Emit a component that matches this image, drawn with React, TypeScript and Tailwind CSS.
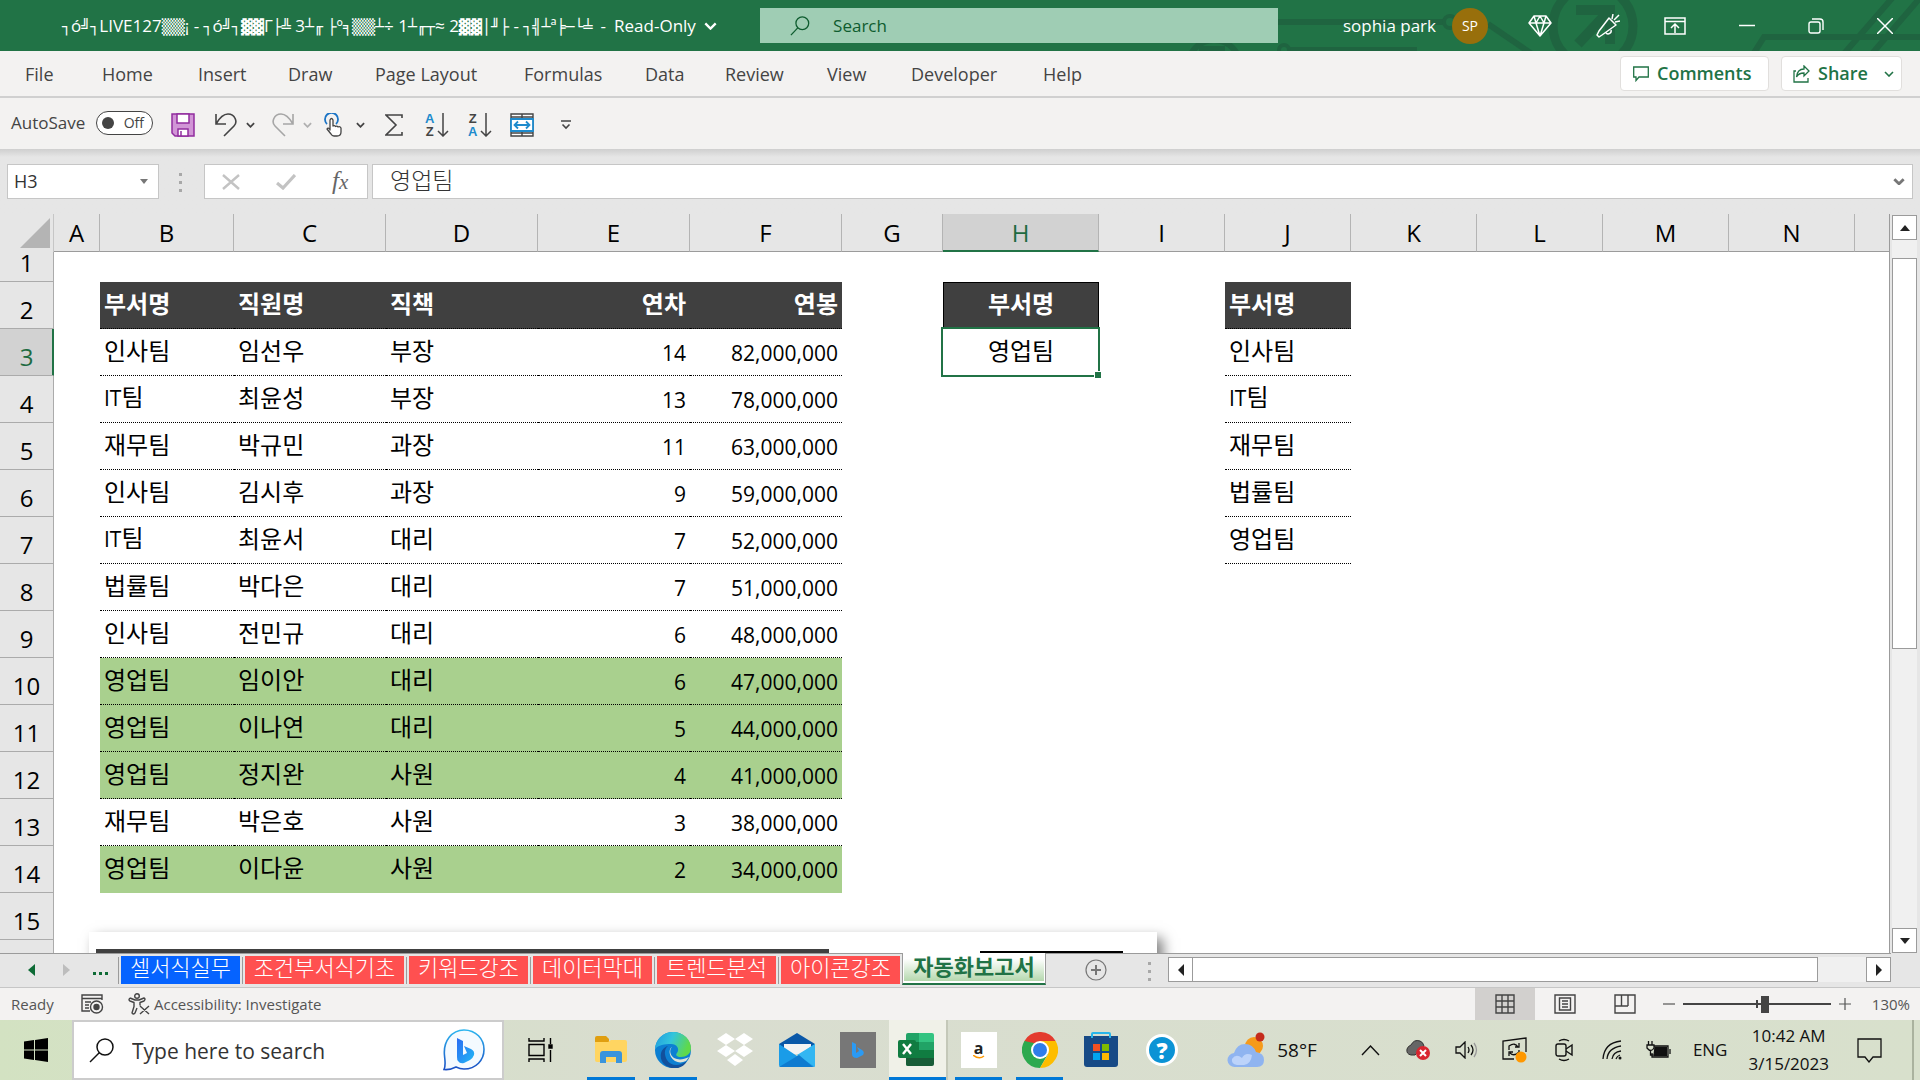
import type { ReactNode } from "react";

interface Employee {
  team: string;
  name: string;
  title: string;
  years: number;
  salary: string;
}

const EMPLOYEES: Employee[] = [
  { team: "인사팀", name: "임선우", title: "부장", years: 14, salary: "82,000,000" },
  { team: "IT팀", name: "최윤성", title: "부장", years: 13, salary: "78,000,000" },
  { team: "재무팀", name: "박규민", title: "과장", years: 11, salary: "63,000,000" },
  { team: "인사팀", name: "김시후", title: "과장", years: 9, salary: "59,000,000" },
  { team: "IT팀", name: "최윤서", title: "대리", years: 7, salary: "52,000,000" },
  { team: "법률팀", name: "박다은", title: "대리", years: 7, salary: "51,000,000" },
  { team: "인사팀", name: "전민규", title: "대리", years: 6, salary: "48,000,000" },
  { team: "영업팀", name: "임이안", title: "대리", years: 6, salary: "47,000,000" },
  { team: "영업팀", name: "이나연", title: "대리", years: 5, salary: "44,000,000" },
  { team: "영업팀", name: "정지완", title: "사원", years: 4, salary: "41,000,000" },
  { team: "재무팀", name: "박은호", title: "사원", years: 3, salary: "38,000,000" },
  { team: "영업팀", name: "이다윤", title: "사원", years: 2, salary: "34,000,000" },
];

const TEAMS = ["인사팀", "IT팀", "재무팀", "법률팀", "영업팀"];
const SELECTED_TEAM = "영업팀";

const COLUMNS = [
  { id: "A", w: "w-[46px]" },
  { id: "B", w: "w-[134px]" },
  { id: "C", w: "w-[152px]" },
  { id: "D", w: "w-[152px]" },
  { id: "E", w: "w-[152px]" },
  { id: "F", w: "w-[152px]" },
  { id: "G", w: "w-[101px]" },
  { id: "H", w: "w-[156px]" },
  { id: "I", w: "w-[126px]" },
  { id: "J", w: "w-[126px]" },
  { id: "K", w: "w-[126px]" },
  { id: "L", w: "w-[126px]" },
  { id: "M", w: "w-[126px]" },
  { id: "N", w: "w-[126px]" },
];

const MENU = [
  { label: "File", w: "w-[77px]" },
  { label: "Home", w: "w-24" },
  { label: "Insert", w: "w-[90px]" },
  { label: "Draw", w: "w-[87px]" },
  { label: "Page Layout", w: "w-[149px]" },
  { label: "Formulas", w: "w-[121px]" },
  { label: "Data", w: "w-20" },
  { label: "Review", w: "w-[102px]" },
  { label: "View", w: "w-[84px]" },
  { label: "Developer", w: "w-[132px]" },
  { label: "Help", w: "w-20" },
];

const SHEETS = [
  { name: "셀서식실무", w: "w-[119px]", bg: "bg-[#0563ff]" },
  { name: "조건부서식기초", w: "w-[159px]", bg: "bg-[#ff5050]" },
  { name: "키워드강조", w: "w-[119px]", bg: "bg-[#ff5050]" },
  { name: "데이터막대", w: "w-[119px]", bg: "bg-[#ff5050]" },
  { name: "트렌드분석", w: "w-[119px]", bg: "bg-[#ff5050]" },
  { name: "아이콘강조", w: "w-[119px]", bg: "bg-[#ff5050]" },
];

const FILE_NAME = "┐ó╝┐LIVE127▒▒¡ - ┐ó╝┐▓▓Γ├╩ 3┴╓ ├º╕▒▒┴÷ 1┴╓┬≈ 2▓▓│╜├ - ┐╣┴ª╞─└╧";

function Chevron({ className = "", w = 2 }: { className?: string; w?: number }) {
  return (
    <svg viewBox="0 0 10 6" className={className} fill="none" stroke="currentColor" strokeWidth={w}>
      <path d="M1 1l4 4 4-4" />
    </svg>
  );
}

// Circuit pattern behind the right end of the title bar
function TitlePattern() {
  return (
    <svg
      viewBox="1180 0 740 51"
      className="absolute right-0 top-0 h-[51px] w-[740px]"
      fill="none"
      stroke="#1f6440"
      strokeWidth="6"
    >
      <circle cx="1214" cy="66" r="26" />
      <path d="M1199 49h26" />
      <path d="M1278 22h165M1289 50h128" />
      <circle cx="1284" cy="50" r="5" strokeWidth="4" />
      <circle cx="1450" cy="22" r="6" strokeWidth="4" />
      <path d="M1488 24l44 30" />
      <circle cx="1593" cy="26" r="40" strokeWidth="9" />
      <path d="M1576 10h34v34M1608 12l-30 32" strokeWidth="10" />
      <path d="M1752 56l12-19h156M1842 56l52-60M1870 56l50-58" />
    </svg>
  );
}

function TitleBar() {
  return (
    <header className="relative flex h-[51px] shrink-0 items-center bg-[#217346] text-white">
      <TitlePattern />
      <div className="relative flex w-[760px] items-center pl-[62px] text-[17px] whitespace-nowrap">
        <span>
          {FILE_NAME.split(/([\u2500-\u259f]+)/).map((part, i) =>
            i % 2 ? (
              <span key={i} className="font-['DejaVu_Sans'] text-[15px]">
                {part}
              </span>
            ) : (
              part
            ),
          )}
        </span>
        <span className="ml-2">-</span>
        <button type="button" className="ml-2 flex items-center gap-2">
          Read-Only
          <Chevron className="h-2 w-[13px]" w={1.8} />
        </button>
      </div>
      <label className="relative flex h-[35px] w-[518px] items-center bg-[#9fcdb4] pl-[30px] text-[#0e5c2f]">
        <svg viewBox="0 0 22 22" className="size-[22px]" fill="none" stroke="currentColor" strokeWidth="1.4">
          <circle cx="13.5" cy="8" r="7" />
          <path d="M8.5 13L1 21" />
        </svg>
        <input
          type="search"
          aria-label="Search"
          placeholder="Search"
          className="ml-[23px] w-full bg-transparent text-[17px] outline-none placeholder:text-[#0e5c2f]"
        />
      </label>
      <div className="relative ml-auto flex items-center pr-[27px]">
        <span className="text-[17px]">sophia park</span>
        <span className="ml-4 flex size-9 items-center justify-center rounded-full bg-[#986f0b] text-[14px]">SP</span>
        <button type="button" aria-label="Premium" className="ml-10">
          <svg viewBox="0 0 24 24" className="size-6" fill="none" stroke="currentColor" strokeWidth="1.5" strokeLinejoin="round">
            <path d="M6 2h12l5 7-11 13L1 9zM1 9h22M6 2l2 7 4 13 4-13 2-7M8 9l4-7 4 7" />
          </svg>
        </button>
        <button type="button" aria-label="What's new" className="ml-11">
          <svg viewBox="0 0 24 24" className="size-6" fill="none" stroke="currentColor" strokeWidth="1.5" strokeLinejoin="round">
            <path d="M13 4l7 7L6 21l-3 2-2-2 2-4zM10 19a3 3 0 005-3M16 5l1-5M18 6l5-5M19 8l5-1" />
          </svg>
        </button>
        <button type="button" aria-label="Ribbon display options" className="ml-11">
          <svg viewBox="0 0 22 18" className="h-[18px] w-[22px]" fill="none" stroke="currentColor" strokeWidth="1.5">
            <path d="M1 1h20v16H1zM1 4.5h20M11 16V7M7 11l4-4 4 4" />
          </svg>
        </button>
        <button type="button" aria-label="Minimize" className="ml-[53px]">
          <svg viewBox="0 0 16 16" className="size-4" stroke="currentColor" strokeWidth="1.5">
            <path d="M0 7.5h16" />
          </svg>
        </button>
        <button type="button" aria-label="Restore" className="ml-[53px]">
          <svg viewBox="0 0 16 16" className="size-4" fill="none" stroke="currentColor" strokeWidth="1.4">
            <rect x="1" y="4" width="11" height="11" rx="2" />
            <path d="M4 1h8a3 3 0 013 3v8" />
          </svg>
        </button>
        <button type="button" aria-label="Close" className="ml-[53px]">
          <svg viewBox="0 0 16 16" className="size-4" stroke="currentColor" strokeWidth="1.5">
            <path d="M0 0l16 16M16 0L0 16" />
          </svg>
        </button>
      </div>
    </header>
  );
}

function MenuBar() {
  return (
    <nav className="flex h-[47px] shrink-0 items-center border-b-2 border-[#d0d0d0] pl-[25px] text-[18px] text-[#444]">
      {MENU.map((m) => (
        <button key={m.label} type="button" className={`${m.w} pt-[2px] text-left whitespace-nowrap`}>
          {m.label}
        </button>
      ))}
      <div className="mr-[18px] ml-auto flex gap-3 text-[18px] font-semibold text-[#217346]">
        <button type="button" className="flex h-[35px] w-[149px] items-center gap-2 rounded-sm border border-[#e1dfdd] bg-white pl-3">
          <svg viewBox="0 0 16 16" className="size-4 shrink-0" fill="none" stroke="currentColor" strokeWidth="1.3">
            <path d="M.7 1h14.6v10H6l-3 3.5V11H.7z" />
          </svg>
          Comments
        </button>
        <button type="button" className="flex h-[35px] w-[121px] items-center gap-2 rounded-sm border border-[#e1dfdd] bg-white pl-[11px]">
          <svg viewBox="0 0 17 18" className="h-[18px] w-[17px] shrink-0" fill="none" stroke="currentColor" strokeWidth="1.3">
            <path d="M3 6H1v11h14v-4M11 1l5 5-5 5V8c-4 0-6 1-7.5 4C4 7 7 4 11 4z" />
          </svg>
          Share
          <Chevron className="ml-auto mr-[7px] h-[6px] w-[10px]" w={1.6} />
        </button>
      </div>
    </nav>
  );
}

function SortIcon({ top, bottom, topColor, bottomColor }: { top: string; bottom: string; topColor: string; bottomColor: string }) {
  return (
    <span className="flex h-[26px] w-6 items-center justify-between">
      <span className="flex flex-col font-['Liberation_Sans',sans-serif] text-[13px] leading-[13px] font-bold">
        <span className={topColor}>{top}</span>
        <span className={bottomColor}>{bottom}</span>
      </span>
      <svg viewBox="0 0 12 24" className="h-6 w-3" fill="none" stroke="#444" strokeWidth="1.5">
        <path d="M6 0v23M1 18l5 5 5-5" />
      </svg>
    </span>
  );
}

function QuickAccess() {
  return (
    <div className="flex h-[51px] shrink-0 items-center pt-[2px] pl-[11px] text-[#444]">
      <span id="autosave" className="mb-1 w-[85px] text-[17px]">
        AutoSave
      </span>
      <button
        type="button"
        role="switch"
        aria-checked="false"
        aria-labelledby="autosave"
        className="mb-1 flex h-6 w-[57px] items-center justify-between rounded-full border border-[#444] bg-white pr-2 pl-[5px] text-[14px]"
      >
        <span className="size-3 rounded-full bg-[#444]" />
        Off
      </button>
      <button type="button" aria-label="Save" className="ml-[18px]">
        <svg viewBox="0 0 24 24" className="size-6" fill="#d195d6" stroke="#912d9f" strokeWidth="1.5">
          <path d="M1 1h22v22H4l-3-3z" />
          <path d="M6 1h12v9H6zM7 16h10v7H7z" fill="#fff" />
          <path d="M10 18v5" />
        </svg>
      </button>
      <button type="button" aria-label="Undo" className="ml-5">
        <svg viewBox="0 0 22 24" className="h-6 w-[22px]" fill="none" stroke="#444" strokeWidth="1.6">
          <path d="M1 1v10h10M1 11C5 4 9 1 13 1c7 0 10 8 6 12L9 23" />
        </svg>
      </button>
      <button type="button" aria-label="Undo history" className="ml-[9px]">
        <Chevron className="h-[6px] w-[9px]" />
      </button>
      <button type="button" aria-label="Redo" className="ml-[17px]">
        <svg viewBox="0 0 22 24" className="h-6 w-[22px]" fill="none" stroke="#a6a6a6" strokeWidth="1.6">
          <path d="M21 1v10H11M21 11C17 4 13 1 9 1 2 1-1 9 3 13l10 10" />
        </svg>
      </button>
      <button type="button" aria-label="Redo history" className="ml-[9px] text-[#b0b0b0]">
        <Chevron className="h-[6px] w-[9px]" />
      </button>
      <button type="button" aria-label="Touch mode" className="ml-3">
        <svg viewBox="0 0 20 24" className="h-6 w-5" fill="#fff" stroke="#444" strokeWidth="1.3" strokeLinejoin="round">
          <path d="M3 11a6.500 6.500 0 119 0" fill="none" stroke="#1b74c5" strokeWidth="1.8" />
          <path d="M6 17V7q1.500-3 3 0v6q1.500-1 2.500.5 1.500-1 2.500.5 2-1 3 1v4q0 4-4 4h-3q-2 0-3-2l-4-5q1-2 3 .5z" />
        </svg>
      </button>
      <button type="button" aria-label="Touch mode options" className="ml-3">
        <Chevron className="h-[6px] w-[9px]" />
      </button>
      <button type="button" aria-label="AutoSum" className="ml-5">
        <svg viewBox="0 0 18 22" className="h-[22px] w-[18px]" fill="none" stroke="#444" strokeWidth="1.6">
          <path d="M17 4V1H1l10 10L1 21h16v-3" />
        </svg>
      </button>
      <button type="button" aria-label="Sort ascending" className="ml-[22px]">
        <SortIcon top="A" bottom="Z" topColor="text-[#1e8bcd]" bottomColor="text-[#444]" />
      </button>
      <button type="button" aria-label="Sort descending" className="ml-[19px]">
        <SortIcon top="Z" bottom="A" topColor="text-[#444]" bottomColor="text-[#1e8bcd]" />
      </button>
      <button type="button" aria-label="Merge and center" className="ml-[18px]">
        <svg viewBox="0 0 24 24" className="size-6" fill="#fff" stroke="#444" strokeWidth="1.4">
          <path d="M1 1h22v22H1zM12 1v22M1 4h22M1 20h22" />
          <path d="M1 6h22v12H1zM5 12h14M8 8.500L4.500 12 8 15.500M16 8.500l3.500 3.500-3.500 3.500" stroke="#1e8bcd" strokeWidth="1.8" />
        </svg>
      </button>
      <button type="button" aria-label="Customize toolbar" className="ml-[26px]">
        <svg viewBox="0 0 12 10" className="h-[10px] w-3" fill="none" stroke="#444" strokeWidth="1.6">
          <path d="M1 1h10M2.500 4.500L6 8l3.500-3.500" />
        </svg>
      </button>
    </div>
  );
}

function Dots({ className = "" }: { className?: string }) {
  return (
    <span className={`flex flex-col gap-[5px] ${className}`}>
      <i className="size-[3px] bg-[#a8a8a8]" />
      <i className="size-[3px] bg-[#a8a8a8]" />
      <i className="size-[3px] bg-[#a8a8a8]" />
    </span>
  );
}

function FormulaBar() {
  return (
    <div className="flex h-[65px] shrink-0 items-start bg-linear-to-b from-[#cfcfcf] to-[#e6e6e6] to-[8px] pt-[15px] pr-[7px] pl-[7px]">
      <div className="flex h-[35px] w-[152px] items-center border border-[#c6c6c6] bg-white pr-[10px]">
        <input aria-label="Name box" defaultValue="H3" className="w-full pl-[6px] text-[18px] text-[#333] outline-none" />
        <svg viewBox="0 0 8 5" className="h-[5px] w-2 shrink-0" fill="#777">
          <path d="M0 0h8L4 5z" />
        </svg>
      </div>
      <Dots className="mt-[9px] ml-5" />
      <div className="ml-[22px] flex h-[35px] w-[164px] items-center border border-[#c6c6c6] bg-white pl-[17px]">
        <button type="button" aria-label="Cancel">
          <svg viewBox="0 0 18 16" className="h-4 w-[18px]" stroke="#c3c3c3" strokeWidth="2.4">
            <path d="M1 1l16 14M17 1L1 15" />
          </svg>
        </button>
        <button type="button" aria-label="Enter" className="ml-9">
          <svg viewBox="0 0 20 16" className="h-4 w-5" fill="none" stroke="#c3c3c3" strokeWidth="3.2">
            <path d="M1 9l6 5L19 1" />
          </svg>
        </button>
        <button
          type="button"
          aria-label="Insert function"
          className="ml-9 font-['Liberation_Serif',serif] text-[25px] leading-6 text-[#666] italic"
        >
          f<span className="text-[21px]">x</span>
        </button>
      </div>
      <div className="ml-1 flex h-[35px] flex-1 items-center border border-[#c6c6c6] bg-white pr-[7px] pl-[17px]">
        <input
          aria-label="Formula bar"
          defaultValue={SELECTED_TEAM}
          className="h-[31px] flex-1 pb-[5px] font-['Noto_Sans_CJK_KR',sans-serif] text-[23px] font-light text-[#333] outline-none"
        />
        <Chevron className="h-[7px] w-3 text-[#777]" w={2.4} />
      </div>
    </div>
  );
}

const DARK = "bg-[#404040] text-white font-bold";
const DOTTED = "border-b border-dotted border-black";

// Latin letters sit a little smaller than the Hangul beside them
function TeamName({ name }: { name: string }) {
  if (!name.startsWith("IT")) return <>{name}</>;
  return (
    <>
      <span className="text-[21px]">IT</span>
      {name.slice(2)}
    </>
  );
}

function Cell({ children, className = "", num = false }: { children?: ReactNode; className?: string; num?: boolean }) {
  return (
    <td className={`px-1 pb-[3px] whitespace-nowrap ${className}`}>
      {num ? <span className="block pt-1 text-right text-[21px] leading-[28px]">{children}</span> : children}
    </td>
  );
}

function SheetRow({ row }: { row: number }) {
  const emp = EMPLOYEES[row - 3];
  const team = TEAMS[row - 3];
  const active = row === 3;
  const fill = emp && emp.team === SELECTED_TEAM ? "bg-[#a9d08e]" : "";
  const line = row < 14 ? DOTTED : "";
  const style = `${line} ${fill}`;

  return (
    <tr className={row === 1 ? "h-[30px]" : "h-[47px]"}>
      <th
        scope="row"
        className={`border-r border-b pb-[7px] text-center align-bottom text-[24px] leading-[22px] font-normal ${
          active
            ? "border-r-[#217346] border-b-[#ababab] bg-[#d2d2d2] text-[#1e6b41] shadow-[inset_-1px_0_#217346]"
            : "border-[#ababab] bg-[#e6e6e6] text-black"
        }`}
      >
        {row < 16 && row}
      </th>
      <td />
      {row === 2 && (
        <>
          <Cell className={`${DARK} ${DOTTED}`}>부서명</Cell>
          <Cell className={`${DARK} ${DOTTED}`}>직원명</Cell>
          <Cell className={`${DARK} ${DOTTED}`}>직책</Cell>
          <Cell className={`${DARK} ${DOTTED} text-right`}>연차</Cell>
          <Cell className={`${DARK} ${DOTTED} text-right`}>연봉</Cell>
          <td />
          <Cell className={`${DARK} border border-black text-center`}>부서명</Cell>
          <td />
          <Cell className={`${DARK} ${DOTTED}`}>부서명</Cell>
        </>
      )}
      {emp && (
        <>
          <Cell className={style}>
            <TeamName name={emp.team} />
          </Cell>
          <Cell className={style}>{emp.name}</Cell>
          <Cell className={style}>{emp.title}</Cell>
          <Cell className={style} num>{emp.years}</Cell>
          <Cell className={style} num>{emp.salary}</Cell>
          <td />
          {active ? (
            <td className="relative pb-[4px] text-center">
              {SELECTED_TEAM}
              <span className="absolute -top-[2px] -right-px -bottom-px -left-[2px] border-2 border-[#217346]" />
              <span className="absolute -right-[3px] -bottom-[3px] size-2 border border-white bg-[#217346]" />
            </td>
          ) : (
            <td />
          )}
          <td />
          {team ? (
            <Cell className={DOTTED}>
              <TeamName name={team} />
            </Cell>
          ) : (
            <td />
          )}
        </>
      )}
    </tr>
  );
}

function Sheet() {
  return (
    <main className="relative min-w-0 flex-1 overflow-hidden border-r border-[#9b9b9b] bg-white">
      <table className="w-full table-fixed border-separate border-spacing-0 font-['Open_Sans','Noto_Sans_CJK_KR',sans-serif] text-[24px] leading-[30px] text-black">
        <colgroup>
          <col className="w-[54px]" />
          {COLUMNS.map((c) => (
            <col key={c.id} className={c.w} />
          ))}
          <col />
        </colgroup>
        <thead>
          <tr className="h-[38px]">
            <th className="border-r border-[#c6c6c6] bg-[#e6e6e6] align-bottom">
              <svg viewBox="0 0 30 30" className="mb-[4px] ml-[20px] size-[30px]" fill="#b4b4b4">
                <path d="M30 0v30H0z" />
              </svg>
            </th>
            {COLUMNS.map((c) => (
              <th
                key={c.id}
                scope="col"
                className={`border-r border-r-[#b4b4b4] pt-px font-normal ${
                  c.id === "H"
                    ? "border-b-2 border-b-[#217346] bg-[#d2d2d2] text-[#1e6b41]"
                    : "border-b border-b-[#9b9b9b] bg-[#e6e6e6]"
                }`}
              >
                {c.id}
              </th>
            ))}
            <th className="border-b border-[#9b9b9b] bg-[#e6e6e6]" />
          </tr>
        </thead>
        <tbody>
          {Array.from({ length: 16 }, (_, i) => (
            <SheetRow key={i} row={i + 1} />
          ))}
        </tbody>
      </table>
      {/* linked picture floating over rows 15-16 */}
      <div className="absolute top-[718px] left-[89px] flex h-40 w-[1068px] items-start bg-white pl-[7px] shadow-[6px_6px_12px_#00000080]">
        <div className="mt-[17px] h-20 w-[733px] bg-[#404040]" />
        <div className="mt-[19px] ml-[151px] h-20 w-[143px] bg-black" />
      </div>
    </main>
  );
}

function ScrollArrow({ dir, label }: { dir: "up" | "down" | "left" | "right"; label: string }) {
  const path = { up: "M6 3l5 6H1z", down: "M6 9l5-6H1z", left: "M3 6l6-6v12z", right: "M9 6L3 0v12z" }[dir];
  return (
    <button type="button" aria-label={label} className="flex size-[25px] shrink-0 items-center justify-center border border-[#9b9b9b] bg-white">
      <svg viewBox="0 0 12 12" className="size-3" fill="#222">
        <path d={path} />
      </svg>
    </button>
  );
}

function TabBar() {
  return (
    <div className="flex h-[35px] shrink-0 items-start border-b border-[#c6c6c6] bg-[#e6e6e6]">
      <div className="flex h-[34px] flex-1 items-start border-t border-[#9b9b9b]">
        <button type="button" aria-label="Previous sheets" className="mt-[10px] ml-[28px]">
          <svg viewBox="0 0 7 12" className="h-3 w-[7px]" fill="#0e6b36">
            <path d="M7 0v12L0 6z" />
          </svg>
        </button>
        <button type="button" aria-label="Next sheets" className="mt-[10px] ml-[28px]">
          <svg viewBox="0 0 7 12" className="h-3 w-[7px]" fill="#bdbdbd">
            <path d="M0 0v12l7-6z" />
          </svg>
        </button>
        <button type="button" aria-label="More sheets" className="mt-[18px] mr-[10px] ml-[23px] flex h-[3px] w-[15px] justify-between">
          <i className="size-[3px] bg-[#0e6b36]" />
          <i className="size-[3px] bg-[#0e6b36]" />
          <i className="size-[3px] bg-[#0e6b36]" />
        </button>
        {SHEETS.map((s) => (
          <div key={s.name} className="mt-[2px] flex items-center">
            <span className="mr-[2px] h-[27px] w-px bg-[#9b9b9b]" />
            <button
              type="button"
              className={`${s.w} ${s.bg} mr-[2px] h-[28px] font-['Noto_Sans_CJK_KR',sans-serif] text-[22px] leading-[20px] font-light text-white`}
            >
              <span className="block h-[28px]">{s.name}</span>
            </button>
          </div>
        ))}
        <button
          type="button"
          aria-current="page"
          className="-mt-px h-[32px] w-[144px] border-x border-b-2 border-x-[#9b9b9b] border-b-[#217346] bg-white px-px pb-[2px]"
        >
          <span className="block h-[28px] bg-linear-to-b from-white from-20% to-[#b5d8ae] font-['Noto_Sans_CJK_KR',sans-serif] text-[22px] leading-[24px] font-bold text-[#217346]">
            자동화보고서
          </span>
        </button>
        <button type="button" aria-label="New sheet" className="mt-[5px] ml-[39px]">
          <svg viewBox="0 0 22 22" className="size-[22px]" fill="none" stroke="#777" strokeWidth="1.2">
            <circle cx="11" cy="11" r="10" />
            <path d="M11 6v10M6 11h10" strokeWidth="2" />
          </svg>
        </button>
        <Dots className="mt-2 ml-[41px]" />
        <div className="mt-[3px] ml-[17px] flex h-[25px] flex-1 bg-[#f0f0f0]">
          <ScrollArrow dir="left" label="Scroll left" />
          <div className="mr-[48px] flex-1 border border-l-0 border-[#9b9b9b] bg-white" />
          <ScrollArrow dir="right" label="Scroll right" />
        </div>
      </div>
      <div className="w-[29px]" />
    </div>
  );
}

function StatusBar() {
  return (
    <footer className="flex h-[32px] shrink-0 items-center bg-[#f3f2f1] pr-[10px] pl-[11px] text-[15px] text-[#555]">
      <span className="w-[70px]">Ready</span>
      <button type="button" aria-label="Record macro">
        <svg viewBox="0 0 23 20" className="h-5 w-[23px]" fill="none" stroke="#444" strokeWidth="1.4">
          <path d="M9 17H1V1h20v5M1 4.500h20M4 8h6M4 11h4M4 14h4" />
          <circle cx="15.5" cy="13" r="6" />
          <circle cx="15.5" cy="13" r="2.5" fill="#444" />
        </svg>
      </button>
      <button type="button" className="ml-6 flex items-center gap-1">
        <svg viewBox="0 0 22 22" className="size-[22px]" fill="none" stroke="#444" strokeWidth="1.4" strokeLinejoin="round">
          <circle cx="9" cy="3" r="2.3" />
          <path d="M2 5q-2 2 0 3l4 1.500v4L4 20q1 2 3 0l2-5M2 5l5 2h4l5-2q2 1 0 3l-4 1.500v3M12 13l9 8M21 13l-9 8" />
        </svg>
        Accessibility: Investigate
      </button>
      <div className="ml-auto flex h-full items-center">
        <button type="button" aria-label="Normal view" className="flex h-full w-[60px] items-center justify-center bg-[#d2d0ce]">
          <svg viewBox="0 0 20 20" className="size-5" fill="none" stroke="#444" strokeWidth="1.4">
            <path d="M1 1h18v18H1zM7 1v18M13 1v18M1 7h18M1 13h18" />
          </svg>
        </button>
        <button type="button" aria-label="Page layout view" className="flex h-full w-[60px] items-center justify-center">
          <svg viewBox="0 0 22 20" className="h-5 w-[22px]" fill="none" stroke="#444" strokeWidth="1.4">
            <path d="M1 1h20v18H1zM5.500 4h11v12h-11zM8 7h6M8 10h6M8 13h6" />
          </svg>
        </button>
        <button type="button" aria-label="Page break preview" className="flex h-full w-[60px] items-center justify-center">
          <svg viewBox="0 0 22 20" className="h-5 w-[22px]" fill="none" stroke="#444" strokeWidth="1.4">
            <path d="M1 1h20v18H1zM7.500 1v11M14 1v11M1 12h13" />
          </svg>
        </button>
        <button type="button" aria-label="Zoom out" className="ml-[8px]">
          <svg viewBox="0 0 12 12" className="size-3" stroke="#555" strokeWidth="1.2">
            <path d="M0 6h12" />
          </svg>
        </button>
        <input
          type="range"
          aria-label="Zoom"
          aria-valuetext="130%"
          min={0}
          max={100}
          defaultValue={56}
          className="mx-2 h-[18px] w-[148px] appearance-none bg-[linear-gradient(#444,#444),linear-gradient(#444,#444)] bg-[length:100%_2px,2px_8px] bg-[position:center,50%_50%] bg-no-repeat [&::-webkit-slider-thumb]:h-[17px] [&::-webkit-slider-thumb]:w-2 [&::-webkit-slider-thumb]:appearance-none [&::-webkit-slider-thumb]:bg-[#444]"
        />
        <button type="button" aria-label="Zoom in">
          <svg viewBox="0 0 12 12" className="size-3" stroke="#555" strokeWidth="1.2">
            <path d="M0 6h12M6 0v12" />
          </svg>
        </button>
        <button type="button" className="ml-[21px]">130%</button>
      </div>
    </footer>
  );
}

function BingLogo() {
  return (
    <svg viewBox="0 0 42 42" className="size-[42px] shrink-0">
      <defs>
        <linearGradient id="bingRing" x1="0" y1="0" x2="0" y2="1">
          <stop offset="0" stopColor="#2cb5ef" />
          <stop offset="1" stopColor="#1a4fc4" />
        </linearGradient>
        <linearGradient id="bingB" x1="0" y1="0" x2="1" y2="1">
          <stop offset="0" stopColor="#2b6bf3" />
          <stop offset="1" stopColor="#21b9f5" />
        </linearGradient>
      </defs>
      <path d="M21 1C33 1 41 10 41 20.500S33 40 21 40c-3 0-5-.5-8-2-4 2-8 3-12 2.500 2-4 1-8 .5-14C0 12 9 1 21 1z" fill="#f4faff" stroke="url(#bingRing)" strokeWidth="1.6" />
      <path d="M14 9l6 3v14l4-2-3-7 7 3q4 2 3 6-1 3-4 5l-6 3q-4 1-6-2-1-1-1-4z" fill="url(#bingB)" />
    </svg>
  );
}

const APP_ICONS: { name: string; slot: string; bar: string; icon: ReactNode }[] = [
  {
    name: "File Explorer",
    slot: "w-[62px]",
    bar: "w-12",
    icon: (
      <svg viewBox="0 0 32 28" className="h-7 w-8">
        <path d="M0 2q0-2 2-2h9l3 3v5H0z" fill="#e09f10" />
        <path d="M0 6h13l3-2h14q2 0 2 2v18q0 2-2 2H2q-2 0-2-2z" fill="#ffd561" />
        <path d="M5 27v-9q0-3 3-3h16q3 0 3 3v9h-6v-6H11v6z" fill="#3a94dc" />
      </svg>
    ),
  },
  {
    name: "Edge",
    slot: "w-[62px]",
    bar: "w-12",
    icon: (
      <svg viewBox="0 0 36 36" className="size-9">
        <defs>
          <linearGradient id="edgeTop" x1="0" y1="0" x2="1" y2=".3">
            <stop offset="0" stopColor="#1f9be0" />
            <stop offset=".5" stopColor="#33c5dc" />
            <stop offset="1" stopColor="#5fd94a" />
          </linearGradient>
        </defs>
        <circle cx="18" cy="18" r="18" fill="#0c7fd2" />
        <path d="M0 17C1 6 9 0 18 0c11 0 18 8 18 16 0 6-5 9-10 9-4 0-6-2-4-4 3-4 0-9-6-9S3 13 0 17z" fill="url(#edgeTop)" />
        <path d="M13 14c-4 3-4 9-1 14 4 6 12 7 20 1-5 9-15 9-22 4-7-6-5-17 3-19z" fill="#12509c" />
        <path d="M17 15c-3 3-2 8 2 11 4 2 9 2 15-1l-3 4c-6 3-12 1-15-4-2-4-2-8 1-10z" fill="#dfe2d8" />
      </svg>
    ),
  },
  {
    name: "Dropbox",
    slot: "w-[62px]",
    bar: "",
    icon: (
      <svg viewBox="0 0 36 34" className="h-[34px] w-9" fill="#fff">
        <path d="M9 0l9 6-9 6-9-6zM27 0l9 6-9 6-9-6zM9 12l9 6-9 6-9-6zM27 12l9 6-9 6-9-6zM18 21l8 6-8 6-8-6z" />
      </svg>
    ),
  },
  {
    name: "Mail",
    slot: "w-[61px]",
    bar: "",
    icon: (
      <svg viewBox="0 0 36 34" className="h-[34px] w-9">
        <path d="M0 11L18 0l18 11v6H0z" fill="#0a58a8" />
        <path d="M5 11h27v10H5z" fill="#f3f3f3" />
        <path d="M0 11l18 12L36 11v21q0 2-2 2H2q-2 0-2-2z" fill="#1a9ce8" />
        <path d="M18 22L36 34V11z" fill="#33b6f2" />
        <path d="M0 34l20-12 14 12z" fill="#0f7bd0" />
      </svg>
    ),
  },
  {
    name: "Bing",
    slot: "w-[62px]",
    bar: "",
    icon: (
      <span className="flex size-9 items-center justify-center bg-[#777]">
        <svg viewBox="0 0 12 16" className="h-4 w-3">
          <path d="M0 0l4 2v9l3-2-2-4 5 3q3 2 1 5l-6 3q-5 0-5-4z" fill="#2b9af3" />
        </svg>
      </span>
    ),
  },
  {
    name: "Excel",
    slot: "w-[59px] bg-[#f0f1e8] border-r-2 border-[#c4c8b8] pr-[4px]",
    bar: "w-full right-0",
    icon: (
      <svg viewBox="0 0 36 34" className="h-[34px] w-9">
        <path d="M8 2q0-2 2-2h11v33H10q-2 0-2-2z" fill="#21a366" />
        <path d="M21 0h13q2 0 2 2v7H21z" fill="#33c481" />
        <path d="M8 9h13v8H8z" fill="#107c41" />
        <path d="M21 9h15v8H21z" fill="#21a366" />
        <path d="M8 17h28v8H8z" fill="#107c41" />
        <path d="M8 25h28v6q0 2-2 2H10q-2 0-2-2z" fill="#185c37" />
        <rect y="7" width="18" height="18" rx="2" fill="#107c41" />
        <path d="M5 11l8 10M13 11L5 21" stroke="#fff" strokeWidth="2.4" />
      </svg>
    ),
  },
  {
    name: "Amazon",
    slot: "w-[61px]",
    bar: "w-[47px]",
    icon: (
      <span className="flex size-9 flex-col items-center justify-center bg-white text-[16px] leading-[14px] font-bold text-[#222]">
        a
        <svg viewBox="0 0 12 4" className="h-1 w-3" fill="none" stroke="#f90" strokeWidth="1.5">
          <path d="M0 0q6 5 11 1" />
        </svg>
      </span>
    ),
  },
  {
    name: "Chrome",
    slot: "w-[61px]",
    bar: "w-[47px]",
    icon: (
      <svg viewBox="0 0 36 36" className="size-9">
        <path d="M18 18L2.400 9A18 18 0 0133.600 9z" fill="#e33b2e" />
        <path d="M2.400 9A18 18 0 0018 36l8-14-8-4z" fill="#2da94f" />
        <path d="M33.600 9A18 18 0 0118 36l8-13.500L18 9z" fill="#fdbd00" />
        <path d="M2.400 9H18v6z" fill="#e33b2e" />
        <path d="M2.400 9l8 13.500h6V12z" fill="#2da94f" />
        <circle cx="18" cy="18" r="9" fill="#fff" />
        <circle cx="18" cy="18" r="7" fill="#2f7de9" />
      </svg>
    ),
  },
  {
    name: "Microsoft Store",
    slot: "w-[61px]",
    bar: "",
    icon: (
      <svg viewBox="0 0 34 36" className="h-9 w-[34px]">
        <path d="M8 6V2q0-1 1-1h16q1 0 1 1v4" fill="none" stroke="#27b5ea" strokeWidth="2" />
        <path d="M0 4h34v28q0 3-3 3H3q-3 0-3-3z" fill="#174a86" />
        <path d="M8 6V3M26 6V3" stroke="#27b5ea" strokeWidth="2" />
        <path d="M9 12h7v7H9z" fill="#f25022" />
        <path d="M18 12h7v7h-7z" fill="#7fba00" />
        <path d="M9 21h7v7H9z" fill="#00a4ef" />
        <path d="M18 21h7v7h-7z" fill="#ffb900" />
      </svg>
    ),
  },
  {
    name: "Help",
    slot: "w-[62px]",
    bar: "",
    icon: (
      <span className="flex size-8 items-center justify-center rounded-full border-3 border-white bg-[#0b93d5] text-[22px] leading-6 font-extrabold text-white">
        ?
      </span>
    ),
  },
];

function Tray() {
  return (
    <div className="ml-auto flex h-full items-center text-[18px] text-[#111]">
      <button type="button" className="flex items-center gap-3">
        <svg viewBox="0 0 38 36" className="h-9 w-[38px]">
          <circle cx="27" cy="14" r="9" fill="#f69a1b" />
          <circle cx="33" cy="5" r="4.5" fill="#c42b1c" />
          <path d="M8 35a7 7 0 01-1-14q3-9 11-9t11 8q8 1 8 8t-7 7z" fill="#8fb4f0" />
          <path d="M10 33q-6-1-5-6 4-6 10-1 3-6 10-3-1 9-8 10z" fill="#bcd3fa" />
        </svg>
        <span className="text-[19px]">58°F</span>
      </button>
      <button type="button" aria-label="Show hidden icons" className="ml-11">
        <svg viewBox="0 0 19 11" className="h-[11px] w-[19px]" fill="none" stroke="currentColor" strokeWidth="1.4">
          <path d="M1 10l8.500-9L18 10" />
        </svg>
      </button>
      <svg viewBox="0 0 24 22" className="ml-[26px] h-[22px] w-6">
        <path d="M5 16q-5-1-4-6 1-3 4-4 3-6 9-4 3 1 4 5l-9 9z" fill="#666" stroke="#333" />
        <circle cx="17" cy="14" r="7" fill="#d9252f" />
        <path d="M14 11l6 6M20 11l-6 6" stroke="#fff" strokeWidth="2" />
      </svg>
      <svg viewBox="0 0 24 18" className="ml-[25px] h-[18px] w-6" fill="none" stroke="currentColor" strokeWidth="1.3">
        <path d="M1 6v6h4l5 5V1L5 6zM13 6q2 3 0 6M16 4q4 5 0 10" />
        <path d="M19 2q5 7 0 14" stroke="#999" />
      </svg>
      <svg viewBox="0 0 26 26" className="ml-[23px] size-[26px]" fill="none" stroke="currentColor" strokeWidth="1.3">
        <path d="M12 22H1V4l23-3v14M7 13V9q6-4 9 1M17 6v4h-4M17 13v2q-5 5-9 1M7 19v-4h4" />
        <circle cx="19" cy="20" r="5.5" fill="#ff9800" stroke="none" />
      </svg>
      <svg viewBox="0 0 18 24" className="ml-[27px] h-6 w-[18px]" fill="none" stroke="currentColor" strokeWidth="1.4">
        <rect x="1" y="6" width="10" height="12" rx="2" />
        <path d="M11 11l6-4v10l-6-4M4 3q5-3 10 0M4 21q5 3 10 0" />
      </svg>
      <svg viewBox="0 0 20 20" className="ml-[29px] size-5" fill="none" stroke="currentColor" strokeWidth="1.3">
        <path d="M1 19Q2 3 19 1M5 19Q6 8 19 6M10 19q1-7 9-8M14 19q1-3 4-4" />
        <circle cx="18" cy="18" r="1.5" fill="currentColor" stroke="none" />
      </svg>
      <svg viewBox="0 0 26 18" className="ml-6 h-[18px] w-[26px]" fill="none" stroke="currentColor" strokeWidth="1.3">
        <path d="M8 5h14v11H6v-4" />
        <path d="M9 6.500h11.500v8H8z" fill="currentColor" />
        <path d="M24 8v5M1 4h7v3q-3 5-7 0zM2.500 0v4M6 0v4M4.500 9v5h3" />
      </svg>
      <span className="ml-[21px] text-[17px]">ENG</span>
      <button type="button" className="ml-[21px] text-center text-[17px] leading-[28px]">
        10:42 AM
        <br />
        3/15/2023
      </button>
      <button type="button" aria-label="Notifications" className="mr-[30px] ml-[28px]">
        <svg viewBox="0 0 25 25" className="size-[25px]" fill="none" stroke="currentColor" strokeWidth="1.3">
          <path d="M1 1h23v18h-8l-4 5-4-5H1z" />
        </svg>
      </button>
      <span className="h-full w-[8px] border-l-2 border-[#aab29e]" />
    </div>
  );
}

function Taskbar() {
  return (
    <div className="flex h-[60px] shrink-0 items-center bg-linear-to-r from-[#d3e2c2] via-[#d9ddd0] via-35% to-[#d8e0cc]">
      <button type="button" aria-label="Start" className="flex w-[72px] justify-center">
        <svg viewBox="0 0 24 24" className="size-6">
          <path d="M0 3.500L10 2v9.500H0zM11 2l13-2v11.500H11zM0 12.500h10V22L0 20.500zM11 12.500h13V24l-13-2z" />
        </svg>
      </button>
      <label className="flex h-[60px] w-[432px] items-center border-2 border-[#ccc] bg-white pr-[17px] pl-[15px]">
        <svg viewBox="0 0 25 25" className="size-[25px] shrink-0" fill="none" stroke="#111" strokeWidth="1.5">
          <circle cx="16" cy="9" r="8" />
          <path d="M10.500 14.500L1 24" />
        </svg>
        <input
          type="search"
          aria-label="Type here to search"
          placeholder="Type here to search"
          className="ml-[18px] w-full min-w-0 pt-[3px] text-[21px] outline-none placeholder:text-[#333]"
        />
        <BingLogo />
      </label>
      <button type="button" aria-label="Task view" className="mr-[27px] ml-6">
        <svg viewBox="0 0 25 24" className="h-6 w-[25px]" fill="none" stroke="#000" strokeWidth="1.4">
          <path d="M1 0v3h15V0M1 6.500h15v11H1zM1 24v-3h15v3M22.500 0v6M22.500 12v12" />
          <path d="M21 7h3v3h-3z" fill="#000" />
        </svg>
      </button>
      {APP_ICONS.map((app) => (
        <button
          key={app.name}
          type="button"
          aria-label={app.name}
          className={`${app.slot} relative flex h-full items-center justify-center`}
        >
          {app.icon}
          {app.bar && <span className={`${app.bar} absolute bottom-0 h-[3px] bg-[#0078d7]`} />}
        </button>
      ))}
      <Tray />
    </div>
  );
}

export default function App() {
  return (
    <div className="flex h-screen flex-col overflow-hidden bg-[#f3f2f1] font-['Open_Sans','Noto_Sans_CJK_KR',sans-serif]">
      <TitleBar />
      <MenuBar />
      <QuickAccess />
      <FormulaBar />
      <div className="flex min-h-0 flex-1 bg-[#e6e6e6]">
        <Sheet />
        <div className="flex w-[30px] flex-col items-start pl-[2px] pt-px">
          <ScrollArrow dir="up" label="Scroll up" />
          <div className="w-[25px] flex-1 bg-[#f0f0f0] pt-[18px]">
            <div className="h-[391px] border border-[#9b9b9b] bg-white" />
          </div>
          <ScrollArrow dir="down" label="Scroll down" />
        </div>
      </div>
      <TabBar />
      <StatusBar />
      <Taskbar />
    </div>
  );
}
